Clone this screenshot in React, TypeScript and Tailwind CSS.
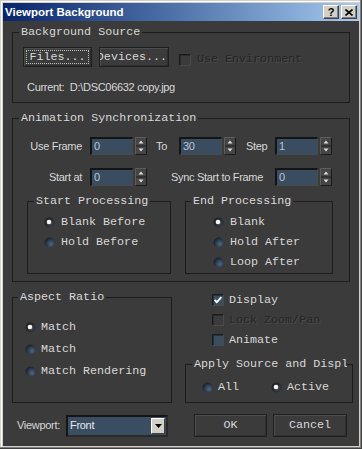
import React from "react";

const MONO = "font-['Liberation_Mono',monospace] text-[11.7px] leading-[13px]";
const SANS = "font-['Liberation_Sans',Arial,sans-serif] text-[11px] tracking-[-0.3px] leading-[13px]";
const LABEL = "text-[#d8d8d8]";
const DIS = "text-[#252525] [text-shadow:1px_1px_0_#4c4c4c]";

function Group({
  legend,
  className,
  legendClass,
  children,
}: {
  legend: string;
  className: string;
  legendClass: string;
  children?: React.ReactNode;
}) {
  return (
    <fieldset className={`border border-[#1c1c1c] p-0 m-0 min-w-0 shrink-0 ${className}`}>
      <legend className={`px-[2px] whitespace-nowrap ${MONO} ${LABEL} ${legendClass}`}>{legend}</legend>
      {children}
    </fieldset>
  );
}

function Spinner() {
  return (
    <svg width="12" height="18" viewBox="0 0 12 18" className="ml-[2px] shrink-0">
      <rect x="0" y="0" width="12" height="18" fill="#454545" />
      <path d="M0.5 17.5 V0.5 H11.5" stroke="#5c5c5c" fill="none" />
      <path d="M0.5 17.5 H11.5 V0.5" stroke="#1a1a1a" fill="none" />
      <line x1="1" y1="9" x2="11" y2="9" stroke="#1f1f1f" />
      <path d="M6 3.5 L8.5 6.5 L3.5 6.5 Z" fill="#dcdcdc" />
      <path d="M6 14.5 L8.5 11.5 L3.5 11.5 Z" fill="#dcdcdc" />
    </svg>
  );
}

function SpinInput({ value }: { value: string }) {
  return (
    <div className="flex items-center shrink-0">
      <div
        className={`w-[43px] h-[18px] bg-[#3a4c5f] border-t-2 border-l-2 border-t-[#141414] border-l-[#141414] border-r border-b border-r-[#4a4a4a] border-b-[#4a4a4a] flex items-center pl-[2px] ${SANS} text-[#b8c6d4]`}
      >
        {value}
      </div>
      <Spinner />
    </div>
  );
}

function Radio({ on }: { on: boolean }) {
  return (
    <svg width="11" height="11" viewBox="0 0 11 11" className="shrink-0">
      <defs>
        <radialGradient id="rgun" cx="0.65" cy="0.65" r="0.6">
          <stop offset="0" stopColor="#4d6884" />
          <stop offset="1" stopColor="#1e2631" />
        </radialGradient>
        <radialGradient id="rgon" cx="0.6" cy="0.6" r="0.6">
          <stop offset="0" stopColor="#3c4a58" />
          <stop offset="1" stopColor="#1f1f1f" />
        </radialGradient>
      </defs>
      <circle cx="5.5" cy="5.5" r="5" fill={on ? "url(#rgon)" : "url(#rgun)"} />
      {on && <circle cx="5" cy="5" r="2.3" fill="#f4f4f4" />}
    </svg>
  );
}

function Check({ kind }: { kind: "checked" | "empty" | "disabled" }) {
  return (
    <svg width="12" height="12" viewBox="0 0 12 12" className="shrink-0">
      {kind !== "disabled" && <rect x="0" y="0" width="12" height="12" fill="#3b4d60" />}
      <path d="M0.5 11.5 V0.5 H11.5" stroke="#1a1a1a" fill="none" />
      <path d="M1.5 11 V1.5 H11" stroke={kind === "disabled" ? "#2a2a2a" : "#26323e"} fill="none" />
      <path d="M0.5 11.5 H11.5 V0.5" stroke="#4a4a4a" fill="none" />
      {kind === "checked" && (
        <path d="M2.6 5.8 L4.8 8.2 L9.4 3.2" stroke="#ffffff" strokeWidth="1.8" fill="none" />
      )}
    </svg>
  );
}

function RadioRow({ on, label, h }: { on: boolean; label: string; h: string }) {
  return (
    <div className={`flex items-center gap-[6px] ${h}`}>
      <Radio on={on} />
      <span className={`${MONO} ${LABEL} whitespace-nowrap`}>{label}</span>
    </div>
  );
}

function Btn({
  label,
  className,
  focus,
  alignEnd,
}: {
  label: string;
  className: string;
  focus?: boolean;
  alignEnd?: boolean;
}) {
  return (
    <div
      className={`shrink-0 flex bg-[#3b3b3b] border border-[#1f1f1f] shadow-[inset_1px_1px_0_#4d4d4d,inset_-1px_-1px_0_#2e2e2e] overflow-hidden ${
        alignEnd ? "p-0" : "p-[2px]"
      } ${className}`}
    >
      <div
        className={`flex-1 min-w-0 flex items-center whitespace-nowrap ${MONO} ${LABEL} ${
          alignEnd ? "justify-end" : "justify-center"
        } ${focus ? "border border-dotted border-[#bdbdbd]" : "border border-transparent"}`}
      >
        <span className="shrink-0">{label}</span>
      </div>
    </div>
  );
}

export default function App() {
  return (
    <div className="w-[362px] h-[449px] bg-[#d4d0c8] p-[3px] flex flex-col shadow-[inset_-1px_-1px_0_#404040,inset_-2px_-2px_0_#808080,inset_1px_1px_0_#d4d0c8,inset_2px_2px_0_#ffffff]">
      {/* title bar */}
      <div className="h-[18px] shrink-0 bg-linear-to-r from-[#0a246a] to-[#a6caf0] flex items-center pl-[2px] pr-[2px]">
        <div className="flex-1 font-['Liberation_Sans',Arial,sans-serif] font-bold text-[11.5px] text-white leading-[14px] whitespace-nowrap">
          Viewport Background
        </div>
        <div className="flex gap-[2px]">
          <div className="w-[16px] h-[14px] bg-[#d4d0c8] border-t border-l border-t-white border-l-white border-r border-b border-r-[#404040] border-b-[#404040] shadow-[inset_-1px_-1px_0_#808080] flex items-center justify-center font-['Liberation_Sans',Arial,sans-serif] font-bold text-[11px] leading-[11px] text-black">
            ?
          </div>
          <div className="w-[16px] h-[14px] bg-[#d4d0c8] border-t border-l border-t-white border-l-white border-r border-b border-r-[#404040] border-b-[#404040] shadow-[inset_-1px_-1px_0_#808080] flex items-center justify-center">
            <svg width="8" height="7" viewBox="0 0 8 7">
              <path d="M0.5 0.5 L7.5 6.5 M7.5 0.5 L0.5 6.5" stroke="#000" strokeWidth="1.6" />
            </svg>
          </div>
        </div>
      </div>

      {/* body */}
      <div className="flex-1 bg-[#3b3b3b] px-[9px] flex flex-col">
        {/* Background Source */}
        <Group legend="Background Source" className="mt-[5px] h-[77px]" legendClass="ml-[6px]">
          <div className="pt-[8px] pl-[10px]">
            <div className="flex items-start">
              <Btn label="Files..." className="w-[69px] h-[20px]" focus />
              <Btn label="Devices..." className="w-[70px] h-[20px] ml-[7px]" alignEnd />
              <div className="flex items-center h-[13px] mt-[6px] ml-[10px] gap-[6px]">
                <Check kind="disabled" />
                <span className={`${MONO} ${DIS} whitespace-nowrap`}>Use Environment</span>
              </div>
            </div>
            <div className={`mt-[14px] pl-[4px] ${SANS} ${LABEL} whitespace-pre`}>
              {"Current:  D:\\DSC06632 copy.jpg"}
            </div>
          </div>
        </Group>

        {/* Animation Synchronization */}
        <Group legend="Animation Synchronization" className="mt-[9px] h-[170px]" legendClass="ml-[6px]">
          <div className="pt-[12px]">
            <div className="flex items-center h-[18px]">
              <div className={`w-[69px] text-right ${SANS} ${LABEL}`}>Use Frame</div>
              <div className="ml-[8px]">
                <SpinInput value="0" />
              </div>
              <div className={`w-[32px] pl-[9px] ${SANS} ${LABEL}`}>To</div>
              <SpinInput value="30" />
              <div className={`w-[39px] pl-[10px] ${SANS} ${LABEL}`}>Step</div>
              <SpinInput value="1" />
            </div>
            <div className="flex items-center h-[18px] mt-[13px]">
              <div className={`w-[69px] text-right ${SANS} ${LABEL}`}>Start at</div>
              <div className="ml-[8px]">
                <SpinInput value="0" />
              </div>
              <div className={`w-[128px] pr-[12px] text-right whitespace-nowrap ${SANS} ${LABEL}`}>
                Sync Start to Frame
              </div>
              <SpinInput value="0" />
            </div>
            <div className="flex mt-[9px] pl-[14px] gap-[14px]">
              <Group legend="Start Processing" className="w-[144px] h-[79px]" legendClass="ml-[6px]">
                <div className="pt-[4px] pl-[16px]">
                  <RadioRow on label="Blank Before" h="h-[20px]" />
                  <RadioRow on={false} label="Hold Before" h="h-[20px]" />
                </div>
              </Group>
              <Group legend="End Processing" className="w-[148px] h-[79px]" legendClass="ml-[5px]">
                <div className="pt-[4px] pl-[27px]">
                  <RadioRow on label="Blank" h="h-[20px]" />
                  <RadioRow on={false} label="Hold After" h="h-[20px]" />
                  <RadioRow on={false} label="Loop After" h="h-[20px]" />
                </div>
              </Group>
            </div>
          </div>
        </Group>

        {/* bottom section */}
        <div className="flex items-start mt-[9px]">
          <Group legend="Aspect Ratio" className="w-[160px] h-[112px]" legendClass="ml-[5px]">
            <div className="pt-[12px] pl-[12px]">
              <div className="flex items-center gap-[5px] h-[22px]">
                <Radio on />
                <span className={`${MONO} ${LABEL}`}>Match</span>
              </div>
              <div className="flex items-center gap-[5px] h-[22px]">
                <Radio on={false} />
                <span className={`${MONO} ${LABEL}`}>Match</span>
              </div>
              <div className="flex items-center gap-[5px] h-[22px]">
                <Radio on={false} />
                <span className={`${MONO} ${LABEL} whitespace-nowrap`}>Match Rendering</span>
              </div>
            </div>
          </Group>

          <div className="ml-[13px] w-[168px] shrink-0 flex flex-col -mt-[1px]">
            <div className="pl-[27px] flex items-center gap-[5px] h-[20px]">
              <Check kind="checked" />
              <span className={`${MONO} ${LABEL}`}>Display</span>
            </div>
            <div className="pl-[27px] flex items-center gap-[5px] h-[20px]">
              <Check kind="disabled" />
              <span className={`${MONO} ${DIS} whitespace-nowrap`}>Lock Zoom/Pan</span>
            </div>
            <div className="pl-[27px] flex items-center gap-[5px] h-[20px]">
              <Check kind="empty" />
              <span className={`${MONO} ${LABEL}`}>Animate</span>
            </div>
            <Group
              legend="Apply Source and Display"
              className="mt-[8px] h-[45px] w-[168px]"
              legendClass="ml-[6px] w-[155px] overflow-hidden"
            >
              <div className="pt-[6px] pl-[16px] flex items-center h-[26px]">
                <div className="w-[69px] flex items-center gap-[5px]">
                  <Radio on={false} />
                  <span className={`${MONO} ${LABEL}`}>All</span>
                </div>
                <div className="flex items-center gap-[5px]">
                  <Radio on />
                  <span className={`${MONO} ${LABEL}`}>Active</span>
                </div>
              </div>
            </Group>
          </div>
        </div>

        {/* bottom row */}
        <div className="flex items-center mt-[11px] h-[23px]">
          <div className={`w-[54px] pl-[5px] ${SANS} ${LABEL}`}>Viewport:</div>
          <div className="w-[102px] h-[22px] shrink-0 flex items-center bg-[#3b4d61] border-t-2 border-l-2 border-t-[#151515] border-l-[#151515] border-r-2 border-b-2 border-r-[#2a2a2a] border-b-[#2a2a2a]">
            <div className={`flex-1 pl-[2px] ${SANS} text-[#e2e8ee]`}>Front</div>
            <div className="w-[14px] h-[16px] mr-[1px] bg-[#d4d0c8] border-t border-l border-t-white border-l-white border-r border-b border-r-[#404040] border-b-[#404040] flex items-center justify-center">
              <svg width="7" height="4" viewBox="0 0 7 4">
                <path d="M0 0 H7 L3.5 4 Z" fill="#000" />
              </svg>
            </div>
          </div>
          <Btn label="OK" className="w-[73px] h-[23px] ml-[26px]" />
          <Btn label="Cancel" className="w-[74px] h-[23px] ml-[6px]" />
        </div>
      </div>
    </div>
  );
}
